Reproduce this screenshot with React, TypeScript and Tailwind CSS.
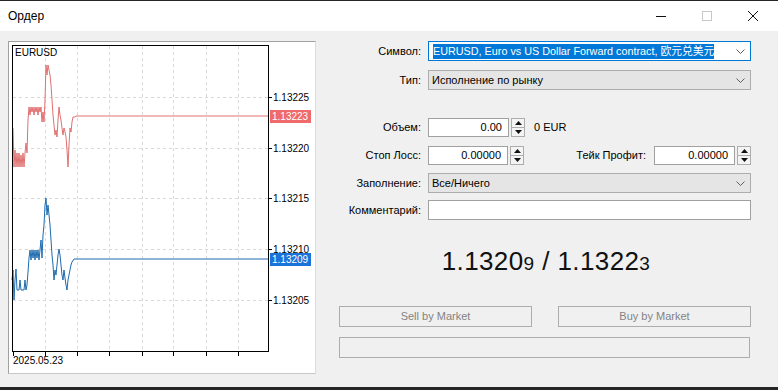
import React from 'react';

const ui = { fontFamily: '"Liberation Sans", Arial, sans-serif' };

const Chevron = () => (
  <svg width="9" height="5" viewBox="0 0 9 5" className="shrink-0">
    <polyline points="0.5,0.5 4.5,4.5 8.5,0.5" fill="none" stroke="#606060" strokeWidth="1" />
  </svg>
);

const Spinner = () => (
  <div className="ml-[2px] flex h-[19px] w-[14px] flex-col border border-[#adadad] bg-[#f4f4f4]">
    <div className="flex flex-1 items-center justify-center border-b border-[#adadad]">
      <svg width="7" height="4" viewBox="0 0 7 4">
        <polygon points="0,4 3.5,0 7,4" fill="#111" />
      </svg>
    </div>
    <div className="flex flex-1 items-center justify-center">
      <svg width="7" height="4" viewBox="0 0 7 4">
        <polygon points="0,0 3.5,4 7,0" fill="#111" />
      </svg>
    </div>
  </div>
);

const Label = ({ children }: { children: React.ReactNode }) => (
  <div className="w-[82px] shrink-0 text-right text-[11px] text-black">{children}</div>
);

const red =
  '12,128 13,128 14,167 15,150 16,167 17,153 18,167 19,153 20,167 21,155 22,167 23,153 24,167 25,153 26,143 27,153 28,120 29,107 30,115 31,107 32,112 33,107 34,115 35,107 36,112 37,107 38,115 39,107 40,112 41,107 42,122 43,112 44,122 45,100 46,65 47,75 48,65 49,70 50,75 51,85 52,100 53,115 54,125 55,135 56,130 57,137 58,120 59,107 60,115 61,120 62,128 63,135 64,128 65,132 66,137 67,150 68,167 69,145 70,128 71,132 72,122 73,117 75,117 76,116 268,116';

const blue =
  '12,280 13,270 14,300 15,280 16,269 17,290 19,290 20,280 21,290 24,290 25,280 26,290 27,285 28,272 29,258 30,250 31,260 32,250 33,258 34,250 35,260 36,250 37,258 38,250 39,260 40,250 41,240 42,258 43,235 44,225 45,205 46,198 47,215 48,205 49,215 50,225 51,240 52,255 53,265 54,280 55,270 56,275 57,265 58,255 59,249 60,255 61,265 62,275 63,280 64,270 65,278 66,285 67,290 68,280 69,275 70,270 71,265 72,262 74,259 268,259';

const vGrid = [45, 77, 109, 142, 173, 206, 238];
const hGrid = [
  { y: 97, t: '1.13225' },
  { y: 148, t: '1.13220' },
  { y: 198, t: '1.13215' },
  { y: 249, t: '1.13210' },
  { y: 300, t: '1.13205' },
];

const Chart = () => (
  <div className="mt-[10px] ml-[8px] h-[333px] w-[308px] shrink-0 border-t border-r border-b border-l border-t-[#a0a0a0] border-r-[#dcdcdc] border-b-[#c8c8c8] border-l-[#a0a0a0] bg-white">
    <svg width="306" height="331" viewBox="9 42 306 331" style={ui}>
      {vGrid.map((x) => (
        <line key={x} x1={x + 0.5} y1={46} x2={x + 0.5} y2={351} stroke="#d9d9d9" strokeDasharray="3 3" />
      ))}
      {hGrid.map((g) => (
        <line key={g.y} x1={13} y1={g.y + 0.5} x2={268} y2={g.y + 0.5} stroke="#d9d9d9" strokeDasharray="3 3" />
      ))}
      <polyline points={red} fill="none" stroke="#e07070" strokeWidth="1" />
      <polyline points={blue} fill="none" stroke="#1d6bb0" strokeWidth="1" />
      <rect x={12.5} y={45.5} width={256} height={306} fill="none" stroke="#000" />
      {[13, ...vGrid].map((x) => (
        <line key={'t' + x} x1={x + 0.5} y1={352} x2={x + 0.5} y2={356} stroke="#000" />
      ))}
      {hGrid.map((g) => (
        <g key={'l' + g.y}>
          <line x1={269} y1={g.y + 0.5} x2={272} y2={g.y + 0.5} stroke="#000" />
          <text x={273} y={g.y + 4} fontSize="10" fill="#000">
            {g.t}
          </text>
        </g>
      ))}
      <rect x={270} y={110} width={41} height={13} fill="#ef6a6a" />
      <text x={272} y={120} fontSize="10" fill="#fff">
        1.13223
      </text>
      <rect x={270} y={253} width={41} height={13} fill="#1a73d8" />
      <text x={272} y={263} fontSize="10" fill="#fff">
        1.13209
      </text>
      <text x={15} y={56} fontSize="10" fill="#000">
        EURUSD
      </text>
      <text x={13} y={364} fontSize="10" fill="#000">
        2025.05.23
      </text>
    </svg>
  </div>
);

const Form = () => (
  <div className="mt-[10px] ml-[23px] flex w-[412px] flex-col">
    <div className="flex h-[20px] items-center">
      <Label>Символ:</Label>
      <div className="ml-[7px] flex h-[20px] w-[323px] items-center justify-between border border-[#0078d7] bg-white pr-[5px] pl-[4px]">
        <span
          className="bg-[#0078d7] text-[10.8px] leading-[15px] text-white"
          style={{ fontFamily: '"Liberation Sans", "Noto Sans CJK SC", sans-serif' }}
        >
          EURUSD, Euro vs US Dollar Forward contract, 欧元兑美元
        </span>
        <Chevron />
      </div>
    </div>
    <div className="mt-[9px] flex h-[20px] items-center">
      <Label>Тип:</Label>
      <div className="ml-[7px] flex h-[20px] w-[323px] items-center justify-between border border-[#adadad] bg-[#e5e5e5] pr-[5px] pl-[3px] text-[11px]">
        <span>Исполнение по рынку</span>
        <Chevron />
      </div>
    </div>
    <div className="mt-[28px] flex h-[19px] items-center">
      <Label>Объем:</Label>
      <div className="ml-[7px] flex h-[19px] w-[81px] items-center justify-end border border-[#a0a0a0] bg-white pr-[6px] text-[11px]">
        0.00
      </div>
      <Spinner />
      <span className="ml-[9px] text-[11px]">0 EUR</span>
    </div>
    <div className="mt-[9px] flex h-[19px] items-center">
      <Label>Стоп Лосс:</Label>
      <div className="ml-[7px] flex h-[19px] w-[80px] items-center justify-end border border-[#a0a0a0] bg-white pr-[6px] text-[11px]">
        0.00000
      </div>
      <Spinner />
      <div className="flex-1 text-right text-[11px]">Тейк Профит:</div>
      <div className="ml-[8px] flex h-[19px] w-[81px] items-center justify-end border border-[#a0a0a0] bg-white pr-[6px] text-[11px]">
        0.00000
      </div>
      <Spinner />
    </div>
    <div className="mt-[8px] flex h-[20px] items-center">
      <Label>Заполнение:</Label>
      <div className="ml-[7px] flex h-[20px] w-[323px] items-center justify-between border border-[#adadad] bg-[#e5e5e5] pr-[5px] pl-[3px] text-[11px]">
        <span>Все/Ничего</span>
        <Chevron />
      </div>
    </div>
    <div className="mt-[7px] flex h-[20px] items-center">
      <Label>Комментарий:</Label>
      <div className="ml-[7px] h-[20px] w-[323px] border border-[#a0a0a0] bg-white" />
    </div>
    <div className="mt-[28px] flex h-[26px] items-baseline justify-center pl-[2px] tracking-[0.4px] text-[#111]">
      <span className="text-[26px] leading-none">1.1320</span>
      <span className="text-[19px] leading-none">9</span>
      <span className="text-[26px] leading-none">&nbsp;/&nbsp;1.1322</span>
      <span className="text-[19px] leading-none">3</span>
    </div>
    <div className="mt-[32px] flex h-[21px] items-center justify-between">
      <div className="flex h-[21px] w-[193px] items-center justify-center border border-[#adadad] bg-[#f0f0f0] text-[11px] text-[#838383]">
        Sell by Market
      </div>
      <div className="flex h-[21px] w-[193px] items-center justify-center border border-[#adadad] bg-[#f0f0f0] text-[11px] text-[#838383]">
        Buy by Market
      </div>
    </div>
    <div className="mt-[10px] h-[21px] w-[411px] border border-[#adadad] bg-[#f0f0f0]" />
  </div>
);

export default function App() {
  return (
    <div className="h-[390px] w-[778px] overflow-hidden bg-[#262626]" style={ui}>
      <div className="mt-[1px] flex h-[386px] w-[778px] flex-col bg-[#f0f0f0]">
        <div className="flex h-[30px] shrink-0 items-center bg-white pl-[8px]">
          <span className="text-[12px] text-black">Ордер</span>
          <div className="ml-auto flex items-center">
            <div className="h-[1px] w-[10px] bg-[#111]" />
            <div className="ml-[36px] h-[10px] w-[10px] border border-[#c8c8c8]" />
            <svg className="mr-[20px] ml-[36px]" width="10" height="10" viewBox="0 0 10 10">
              <path d="M0,0 L10,10 M10,0 L0,10" stroke="#111" strokeWidth="1" />
            </svg>
          </div>
        </div>
        <div className="flex flex-1">
          <Chart />
          <Form />
        </div>
      </div>
    </div>
  );
}
